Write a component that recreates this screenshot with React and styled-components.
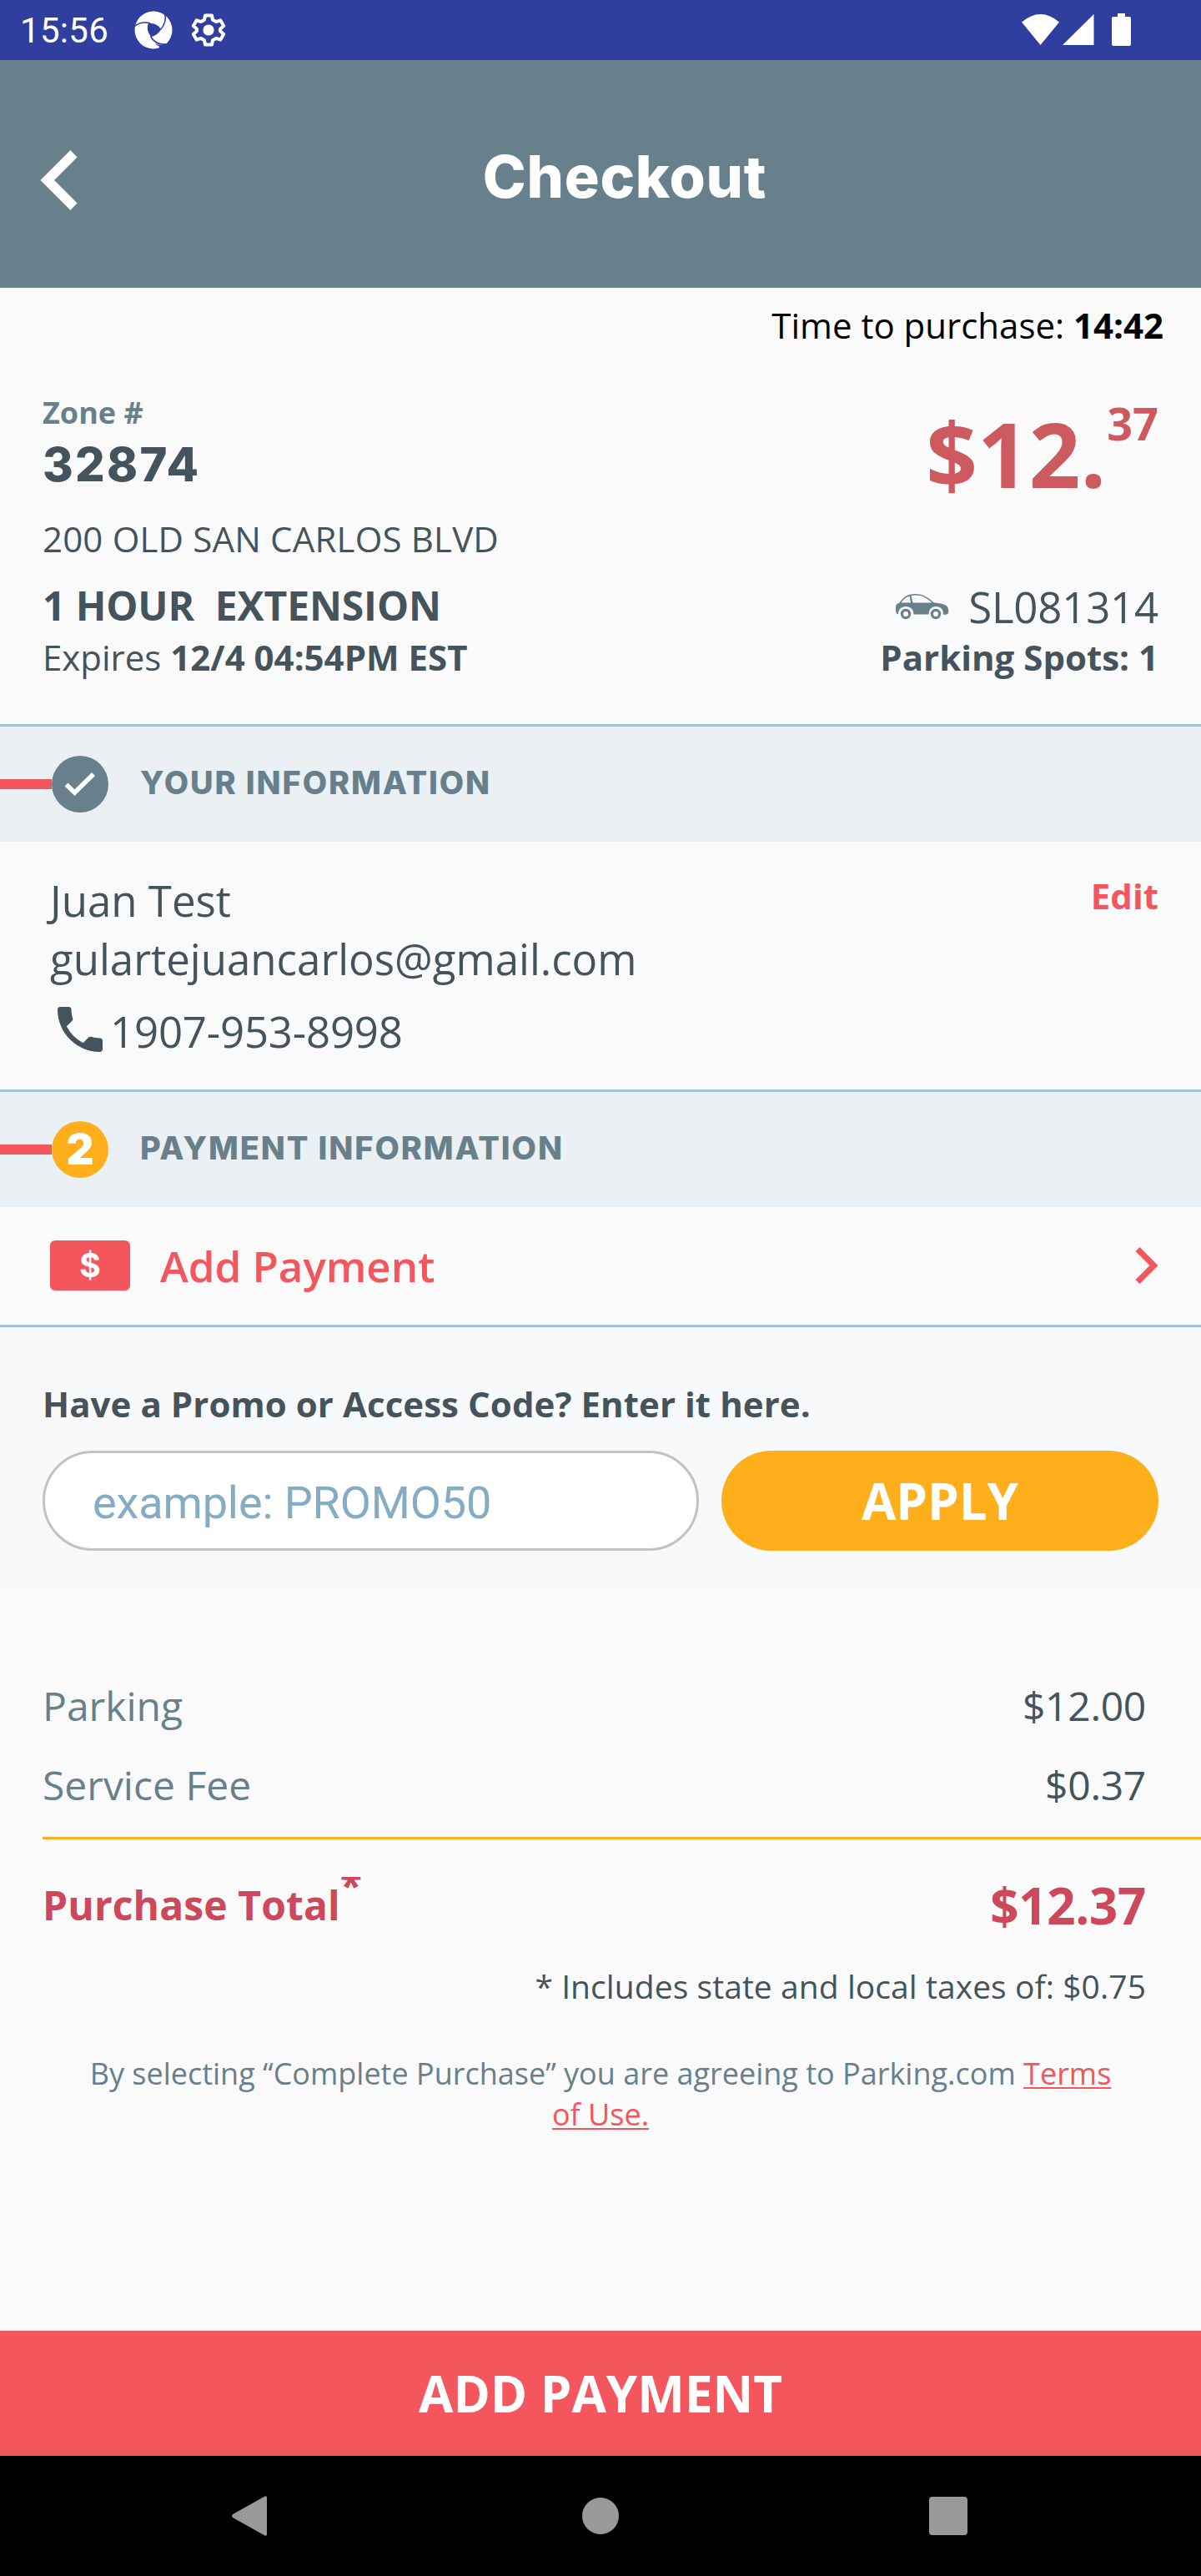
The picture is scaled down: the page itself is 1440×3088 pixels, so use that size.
import React from "react";
import styled, { createGlobalStyle } from "styled-components";

const color = {
  status: "#303f9f",
  slate: "#68808b",
  ink: "#44535c",
  page: "#fafafa",
  band: "#ebf0f4",
  rule: "#a0c4d6",
  coral: "#f3565d",
  price: "#cc5a5f",
  total: "#cc485a",
  amber: "#ffaf1b",
  promo: "#f8f9fb",
};

const sans = `"Open Sans", "Noto Sans", sans-serif`;
const display = `Inter, "Open Sans", sans-serif`;
const system = `Roboto, "Open Sans", sans-serif`;

const GlobalStyle = createGlobalStyle`
  *, *::before, *::after { box-sizing: border-box; }
  body { margin: 0; background: ${color.page}; }
  svg { display: block; flex: none; }
`;

const Screen = styled.div`
  display: flex;
  flex-direction: column;
  width: 1440px;
  height: 3088px;
  overflow: hidden;
  background: ${color.page};
  color: ${color.ink};
  font-family: ${sans};
`;

const StatusBar = styled.div`
  display: flex;
  align-items: center;
  justify-content: space-between;
  flex: none;
  height: 72px;
  padding: 0 83px 0 24px;
  background: ${color.status};
  color: #fff;
`;

const StatusGroup = styled.div`
  display: flex;
  align-items: center;
`;

const Clock = styled.span`
  width: 137px;
  font: 400 42px/72px ${system};
  letter-spacing: 0.3px;
  padding-top: 2px;
`;

const GearBox = styled.span`
  margin-left: 19px;
`;

const Header = styled.header`
  display: grid;
  grid-template-columns: 229px 1fr 171px;
  align-items: center;
  flex: none;
  height: 273px;
  background: ${color.slate};
  color: #fff;
`;

const BackButton = styled.button`
  display: flex;
  padding: 14px 0 0 48px;
  border: 0;
  background: none;
  color: inherit;
`;

const Title = styled.h1`
  margin: 0;
  padding-top: 6px;
  text-align: center;
  font: 800 70px/90px ${display};
  letter-spacing: 0.7px;
`;

const Timer = styled.div`
  padding: 16px 45px 0 0;
  text-align: right;
  color: #000;
  font-size: 42px;
  line-height: 57px;
`;

const Summary = styled.section`
  display: flex;
  justify-content: space-between;
  flex: none;
  height: 450px;
  padding: 52px 51px 0;
`;

const Column = styled.div`
  display: flex;
  flex-direction: column;
  align-items: ${(p) => (p.$end ? "flex-end" : "flex-start")};
`;

const Text = styled.div`
  font-size: ${(p) => p.$size}px;
  line-height: ${(p) => p.$line}px;
  font-weight: ${(p) => p.$weight || 400};
  color: ${(p) => p.$color || "inherit"};
  margin-top: ${(p) => p.$top || 0}px;
  letter-spacing: ${(p) => p.$tracking || 0}px;
  white-space: pre;
`;

const ZoneNumber = styled.div`
  margin-top: 8px;
  font: 800 56px/60px ${display};
  letter-spacing: 2.3px;
`;

const Price = styled.div`
  display: flex;
  align-items: flex-start;
  gap: 1px;
  color: ${color.price};
`;

const Plate = styled.div`
  display: flex;
  align-items: center;
  gap: 23px;
  margin-top: 78px;
`;

const StepBand = styled.div`
  display: flex;
  align-items: center;
  flex: none;
  height: 141px;
  border-top: 3px solid ${color.rule};
  background: ${color.band};
`;

const Connector = styled.span`
  width: 62px;
  height: 12px;
  background: ${color.coral};
`;

const StepBadge = styled.span`
  display: flex;
  align-items: center;
  justify-content: center;
  width: 68px;
  height: 68px;
  margin-right: 38px;
  border-radius: 50%;
  background: ${(p) => (p.$done ? color.slate : color.amber)};
  color: #fff;
  font: 900 51px/66px ${display};
`;

const StepTitle = styled.h2`
  margin: 0;
  padding-bottom: 4px;
  color: ${color.slate};
  font: 800 38px/50px ${display};
  letter-spacing: 1.9px;
`;

const Contact = styled.section`
  display: flex;
  justify-content: space-between;
  flex: none;
  height: 297px;
  padding: 35px 51px 0 60px;
`;

const Phone = styled.div`
  display: flex;
  margin-top: 14px;
`;

const PaymentRow = styled.section`
  display: flex;
  align-items: center;
  flex: none;
  height: 141px;
  padding: 0 51px 1px 60px;
  color: ${color.coral};
`;

const Bill = styled.span`
  display: flex;
  align-items: center;
  justify-content: center;
  width: 96px;
  height: 60px;
  margin-right: 36px;
  border-radius: 6px;
  background: ${color.coral};
  color: #fff;
  font: 700 39px/60px ${display};
`;

const Spring = styled.span`
  flex: 1;
`;

const Promo = styled.section`
  flex: none;
  height: 319px;
  padding: 63px 51px 0;
  border-top: 3px solid ${color.rule};
  background: ${color.promo};
`;

const PromoForm = styled.div`
  display: flex;
  gap: 27px;
  margin-top: 28px;
`;

const PromoInput = styled.input`
  width: 787px;
  height: 120px;
  padding: 5px 57px 0;
  border: 3px solid #c1c4ba;
  border-radius: 60px;
  background: #fff;
  font: 400 54px ${system};
  letter-spacing: -0.12px;
  outline: 0;
  &::placeholder {
    color: #84acc2;
    opacity: 1;
  }
`;

const ApplyButton = styled.button`
  flex: 1;
  height: 120px;
  padding: 0;
  border: 0;
  border-radius: 60px;
  background: ${color.amber};
  color: #fff;
  font: 700 60px/82px ${sans};
`;

const Charges = styled.section`
  display: flex;
  flex-direction: column;
  gap: 30px;
  padding: 105px 66px 30px 51px;
`;

const ChargeRow = styled.div`
  display: flex;
  justify-content: space-between;
  font-size: 48px;
  line-height: 65px;
`;

const ChargeLabel = styled.span`
  color: ${color.slate};
`;

const ChargeAmount = styled.span`
  letter-spacing: -0.3px;
`;

const Divider = styled.hr`
  flex: none;
  width: 1389px;
  height: 3px;
  margin: 0 0 0 51px;
  border: 0;
  background: ${color.amber};
`;

const TotalRow = styled.div`
  display: flex;
  justify-content: space-between;
  height: 82px;
  margin-top: 38px;
  padding: 0 66px 0 51px;
  color: ${color.total};
  font-weight: 700;
`;

const TotalLabel = styled.div`
  display: flex;
  align-items: flex-start;
`;

const Asterisk = styled.span`
  height: 40px;
  margin-top: 7px;
  overflow: hidden;
  font-size: 48px;
  line-height: 20px;
`;

const TaxNote = styled.p`
  margin: 29px 66px 0 0;
  text-align: right;
  font-size: 39px;
  line-height: 53px;
  letter-spacing: 0.07px;
`;

const Terms = styled.p`
  margin: 54px 96px 0;
  text-align: center;
  color: ${color.slate};
  font-size: 36px;
  line-height: 49px;
`;

const TermsLink = styled.a`
  color: ${color.coral};
  text-decoration: underline;
  text-decoration-thickness: 2px;
  text-underline-offset: 3px;
  text-decoration-skip-ink: none;
`;

const SubmitButton = styled.button`
  flex: none;
  height: 150px;
  margin-top: auto;
  padding: 0;
  border: 0;
  background: ${color.coral};
  color: #fff;
  font: 700 60px/82px ${sans};
`;

const NavBar = styled.nav`
  display: grid;
  grid-template-columns: 598px 244px 590px;
  align-items: center;
  justify-items: center;
  flex: none;
  height: 144px;
  background: #000;
`;

const SwirlIcon = () => (
  <svg width="46" height="46" viewBox="0 0 46 46">
    <circle cx="23" cy="23" r="22.5" fill="#fff" />
    <path d="M16.500 15.500 C23 14 29 17 32 22.500 C29 27 25 30.500 20 31 C16 26 15 21 16.500 15.500Z" fill={color.status} />
    <g fill="none" stroke={color.status} strokeWidth="1.600">
      <path d="M0 18.500 C6 14 12 13 19 14.800" />
      <path d="M36.500 2 C38.500 10 36.500 17 31.500 22.500" />
      <path d="M19.500 30.500 C23 37 29 41 39 40" />
    </g>
    <path d="M29.500 47 L30 42.800 Q27 41.500 25 39 Q32 42.500 39 39.500 L37 46Z" fill={color.status} />
  </svg>
);

const GearIcon = () => (
  <svg width="48" height="48" viewBox="0 0 24 24" fill="none" stroke="#fff" strokeWidth="2" strokeLinejoin="round">
    <path d="M10 3.200h4l.5 2.700 2 1.150 2.600-.9 2 3.400-2.100 1.800v1.300l2.100 1.800-2 3.400-2.600-.9-2 1.150-.5 2.700h-4l-.5-2.700-2-1.150-2.600.9-2-3.400 2.100-1.800v-1.300L2.900 9.550l2-3.400 2.600.9 2-1.150z" />
    <circle cx="12" cy="12" r="3.300" fill="#fff" stroke="none" />
  </svg>
);

const SignalIcons = () => (
  <svg width="132" height="40" viewBox="0 0 132 40" fill="#fff">
    <path d="M0 10.500 Q22.500 -8.500 45 10.500 L22.500 38Z" />
    <path d="M49 38 L86.500 1 V38Z" />
    <path d="M115 0h9v4h5a2 2 0 0 1 2 2v31a2 2 0 0 1-2 2h-19a2 2 0 0 1-2-2V6a2 2 0 0 1 2-2h5z" />
  </svg>
);

const BackIcon = () => (
  <svg width="46" height="72" viewBox="0 0 46 72" fill="#fff">
    <path d="M0.500 36 L36.500 0 L44.500 8.500 L17 36 L44.500 63.500 L36.500 72Z" />
  </svg>
);

const CarIcon = () => (
  <svg width="64" height="31" viewBox="0 0 64 31">
    <path
      fill={color.slate}
      fillRule="evenodd"
      d="M4.500 10.500 C9 4 14 0 23 0 C34 0 39 5 46 10.500 C54 11.500 60 12 62 15.500 C63.500 18 63.800 22 62.500 24 Q61.500 25 57 24.800 C57.500 18 53 15 48 15 C43 15 39.500 19 39.500 24.500 H21.500 C21.500 18.500 17.500 15 12 15 C7 15 3 18.500 2.800 24.500 L1 23.500 C-0.500 20 0 14 .8 12.500Z M6.500 10.500 H18 L16.500 2.500 C12 4 9 6.500 6.500 10.500Z M18.500 2 L20.500 10.500 H43.500 C37 5 32.500 1.600 24 1.600 Q21 1.500 18.500 2Z"
    />
    <g fill="none" stroke={color.slate} strokeWidth="3.200">
      <circle cx="12" cy="24" r="4.600" />
      <circle cx="48" cy="24" r="4.600" />
    </g>
  </svg>
);

const CheckIcon = () => (
  <svg width="38" height="30" viewBox="0 0 38 30" fill="none" stroke="#fff" strokeWidth="5.500">
    <path d="M2.500 15.500 L12.500 25.200 L35 3" />
  </svg>
);

const PhoneIcon = () => (
  <svg width="72" height="72" viewBox="0 0 24 24" fill={color.ink}>
    <path d="M6.620 10.790c1.440 2.830 3.760 5.140 6.590 6.590l2.200-2.200c.27-.27.67-.36 1.020-.24 1.120.37 2.330.57 3.570.57.55 0 1 .45 1 1V20c0 .55-.45 1-1 1-9.390 0-17-7.610-17-17 0-.55.45-1 1-1h3.500c.55 0 1 .45 1 1 0 1.250.2 2.450.57 3.570.11.35.03.74-.25 1.020l-2.200 2.200z" />
  </svg>
);

const ChevronIcon = () => (
  <svg width="28" height="44" viewBox="0 0 28 44" fill={color.coral}>
    <path d="M0.500 5 L5.500 0 L27.500 22 L5.500 44 L0.500 39 L17.500 22Z" />
  </svg>
);

const NavBack = () => (
  <svg width="42" height="48" viewBox="0 0 42 48" fill="#999">
    <path d="M39.500 0.500 Q42 -0.500 42 2 V46 Q42 48.500 39.500 47.500 L2 26.500 Q-2 24 2 21.500Z" />
  </svg>
);

const NavHome = () => (
  <svg width="44" height="44" viewBox="0 0 44 44">
    <circle cx="22" cy="22" r="22" fill="#999" />
  </svg>
);

const NavRecent = () => (
  <svg width="46" height="46" viewBox="0 0 46 46">
    <rect width="46" height="46" rx="4" fill="#999" />
  </svg>
);

const charges = [
  ["Parking", "$12.00"],
  ["Service Fee", "$0.37"],
];

export default function App() {
  return (
    <Screen>
      <GlobalStyle />
      <StatusBar>
        <StatusGroup>
          <Clock>15:56</Clock>
          <SwirlIcon />
          <GearBox>
            <GearIcon />
          </GearBox>
        </StatusGroup>
        <SignalIcons />
      </StatusBar>
      <Header>
        <BackButton aria-label="Back">
          <BackIcon />
        </BackButton>
        <Title>Checkout</Title>
      </Header>
      <Timer>
        Time to purchase: <b>14:42</b>
      </Timer>
      <Summary>
        <Column>
          <Text $size={36} $line={49} $weight={700} $color={color.slate}>Zone #</Text>
          <ZoneNumber>32874</ZoneNumber>
          <Text $size={42} $line={57} $top={30} $tracking={0.17}>200 OLD SAN CARLOS BLVD</Text>
          <Text $size={48} $line={65} $top={19} $weight={700} $tracking={-0.12}>{"1 HOUR  EXTENSION"}</Text>
          <Text $size={42} $line={57} $top={1}>
            Expires <b>12/4 04:54PM EST</b>
          </Text>
        </Column>
        <Column $end>
          <Price>
            <Text $size={108} $line={147} $weight={700}>$12.</Text>
            <Text $size={54} $line={74} $weight={700}>37</Text>
          </Price>
          <Plate>
            <CarIcon />
            <Text $size={51} $line={64} $tracking={-0.22}>SL081314</Text>
          </Plate>
          <Text $size={42} $line={57} $weight={700}>Parking Spots: 1</Text>
        </Column>
      </Summary>
      <StepBand>
        <Connector />
        <StepBadge $done>
          <CheckIcon />
        </StepBadge>
        <StepTitle>YOUR INFORMATION</StepTitle>
      </StepBand>
      <Contact>
        <Column>
          <Text $size={51} $line={70}>Juan Test</Text>
          <Text $size={51} $line={70}>gulartejuancarlos@gmail.com</Text>
          <Phone>
            <PhoneIcon />
            <Text $size={51} $line={70} $top={3} $tracking={-0.22}>1907-953-8998</Text>
          </Phone>
        </Column>
        <Text $size={42} $line={57} $top={1} $weight={700} $color={color.coral}>Edit</Text>
      </Contact>
      <StepBand>
        <Connector />
        <StepBadge>2</StepBadge>
        <StepTitle>PAYMENT INFORMATION</StepTitle>
      </StepBand>
      <PaymentRow>
        <Bill>$</Bill>
        <Text $size={51} $line={69} $weight={600}>Add Payment</Text>
        <Spring />
        <ChevronIcon />
      </PaymentRow>
      <Promo>
        <Text $size={42} $line={57} $weight={700} $tracking={0.06}>Have a Promo or Access Code? Enter it here.</Text>
        <PromoForm>
          <PromoInput placeholder="example: PROMO50" />
          <ApplyButton>APPLY</ApplyButton>
        </PromoForm>
      </Promo>
      <Charges>
        {charges.map(([label, amount]) => (
          <ChargeRow key={label}>
            <ChargeLabel>{label}</ChargeLabel>
            <ChargeAmount>{amount}</ChargeAmount>
          </ChargeRow>
        ))}
      </Charges>
      <Divider />
      <TotalRow>
        <TotalLabel>
          <Text $size={48} $line={65} $top={8} $weight={700} $tracking={0.1}>Purchase Total</Text>
          <Asterisk>*</Asterisk>
        </TotalLabel>
        <Text $size={60} $line={82} $weight={700} $tracking={-0.3}>$12.37</Text>
      </TotalRow>
      <TaxNote>* Includes state and local taxes of: $0.75</TaxNote>
      <Terms>
        By selecting “Complete Purchase” you are agreeing to Parking.com <TermsLink>Terms of Use.</TermsLink>
      </Terms>
      <SubmitButton>ADD PAYMENT</SubmitButton>
      <NavBar>
        <NavBack />
        <NavHome />
        <NavRecent />
      </NavBar>
    </Screen>
  );
}
